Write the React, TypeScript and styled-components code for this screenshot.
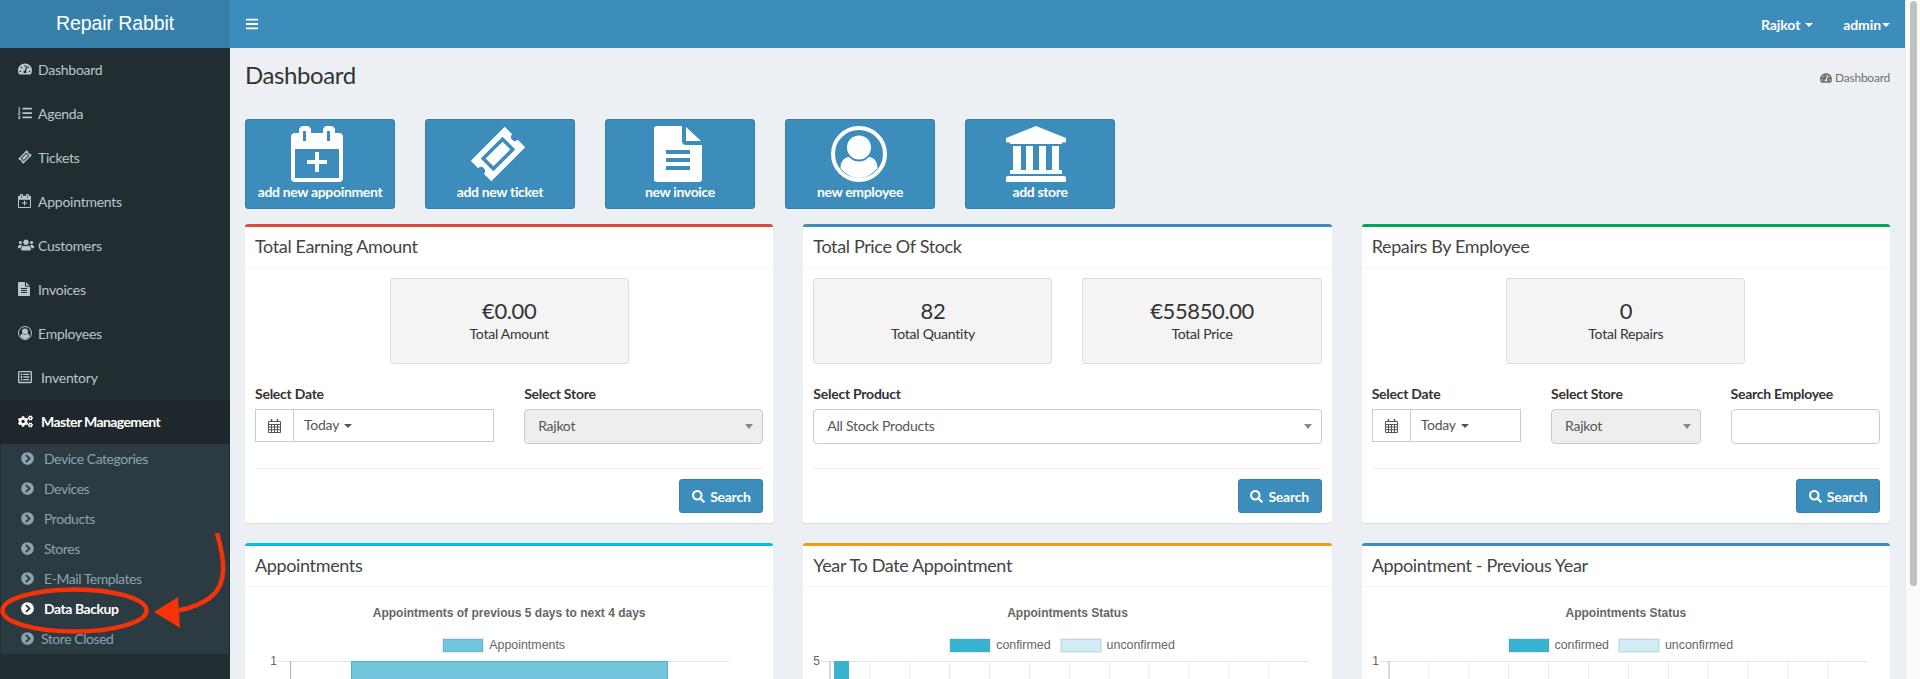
import React from 'react';
import styled, { createGlobalStyle } from 'styled-components';
import {
  FaBars,
  FaChevronCircleRight,
  FaCogs,
  FaListOl,
  FaRegListAlt,
  FaSearch,
  FaTachometerAlt,
  FaUsers,
} from 'react-icons/fa';

const GlobalStyle = createGlobalStyle`
  * { box-sizing: border-box; }
  html, body { margin: 0; height: 100%; overflow: hidden; }
  body {
    font-family: "Lato", "Noto Sans", sans-serif;
    font-size: 14px;
    letter-spacing: -0.25px;
    color: #333;
    background: #ecf0f5;
  }
`;

const Page = styled.div`
  position: relative;
  display: flex;
  height: 679px;
  overflow: hidden;
`;

const Sidebar = styled.aside`
  flex: 0 0 230px;
  background: #222d32;
`;

const Logo = styled.div`
  height: 48px;
  background: #367fa9;
  color: #fff;
  font-family: "Liberation Sans", Arial, sans-serif;
  font-size: 19.5px;
  letter-spacing: -0.1px;
  line-height: 46px;
  text-align: center;
`;

const NavItem = styled.div<{ $active?: boolean }>`
  display: flex;
  align-items: center;
  height: 44px;
  padding: 0 0 2px 18px;
  color: ${(p) => (p.$active ? '#fff' : '#b8c7ce')};
  background: ${(p) => (p.$active ? '#1e282c' : 'transparent')};
  font-weight: ${(p) => (p.$active ? 700 : 400)};
  letter-spacing: ${(p) => (p.$active ? '-0.6px' : '-0.25px')};
`;

const NavIcon = styled.span<{ $wide?: boolean }>`
  display: flex;
  justify-content: flex-start;
  align-items: center;
  width: ${(p) => (p.$wide ? '23px' : '20px')};
`;

const SubMenu = styled.div`
  margin: 0 1px;
  background: #2c3b41;
`;

const SubItem = styled.div<{ $active?: boolean; $tight?: boolean }>`
  display: flex;
  align-items: center;
  height: 30px;
  padding: 0 0 2px 20px;
  gap: ${(p) => (p.$tight ? '7px' : '10px')};
  color: ${(p) => (p.$active ? '#fff' : '#8aa4af')};
  font-weight: ${(p) => (p.$active ? 700 : 400)};
  letter-spacing: -0.45px;
`;

const Main = styled.main`
  flex: 1;
  min-width: 0;
`;

const TopBar = styled.header`
  display: flex;
  align-items: center;
  height: 48px;
  padding: 0 15px;
  background: #3c8dbc;
  color: #fff;
`;

const TopMenu = styled.div<{ $gap?: number }>`
  display: flex;
  align-items: center;
  margin-left: ${(p) => p.$gap ?? 0}px;
  font-weight: 700;
  letter-spacing: -0.1px;
`;

const Caret = styled.i<{ $space: number }>`
  display: block;
  width: 0;
  height: 0;
  margin: 2px 0 0 ${(p) => p.$space}px;
  border-style: solid;
  border-width: 4px 4px 0;
  border-color: currentColor transparent transparent;
`;

const Spacer = styled.div`
  flex: 1;
`;

const ContentHeader = styled.div`
  display: flex;
  align-items: center;
  justify-content: space-between;
  padding: 14px 15px 1px;
`;

const PageTitle = styled.h1`
  margin: 0;
  font-size: 24px;
  font-weight: 400;
  letter-spacing: -0.4px;
  line-height: 26px;
  color: #333;
`;

const Crumb = styled.div`
  display: flex;
  align-items: center;
  gap: 3px;
  margin-top: 5px;
  font-size: 12px;
  color: #6f6f6f;
`;

const QuickRow = styled.div`
  display: flex;
  gap: 30px;
  padding: 30px 15px 15px;
`;

const QuickButton = styled.div`
  display: flex;
  flex-direction: column;
  align-items: center;
  width: 150px;
  height: 90px;
  padding-top: 6px;
  background: #3c8dbc;
  border: 1px solid #367fa9;
  border-radius: 3px;
  color: #fff;
  font-weight: 700;
  letter-spacing: -0.34px;
`;

const QuickIcon = styled.span<{ $shift: number }>`
  display: block;
  height: 56px;
  margin-right: ${(p) => p.$shift * 2}px;
`;

const QuickLabel = styled.span`
  line-height: 20px;
`;

const CardGrid = styled.div`
  display: grid;
  grid-template-columns: repeat(3, 1fr);
  gap: 20px 30px;
  padding: 0 15px;
`;

const Card = styled.section<{ $accent: string }>`
  background: #fff;
  border-top: 3px solid ${(p) => p.$accent};
  border-radius: 3px;
  box-shadow: 0 1px 1px rgba(0, 0, 0, 0.1);
`;

const CardHeader = styled.h3`
  margin: 0;
  height: 41px;
  padding: 0 10px;
  border-bottom: 1px solid #f4f4f4;
  font-size: 18px;
  font-weight: 400;
  letter-spacing: -0.36px;
  line-height: 38px;
  color: #444;
`;

const CardBody = styled.div`
  padding: 10px;
`;

const StatRow = styled.div`
  display: flex;
  justify-content: center;
  gap: 30px;
`;

const StatBox = styled.div`
  width: calc((100% - 30px) / 2);
  height: 86px;
  padding-top: 19px;
  background: #f4f4f4;
  border: 1px solid #ddd;
  border-radius: 3px;
  text-align: center;
  color: #333;
`;

const StatValue = styled.div`
  font-size: 22px;
  letter-spacing: -0.4px;
  line-height: 26px;
`;

const StatLabel = styled.div`
  line-height: 20px;
`;

const FieldRow = styled.div<{ $cols: number }>`
  display: grid;
  grid-template-columns: repeat(${(p) => p.$cols}, 1fr);
  gap: 30px;
  margin-top: 20px;
  height: 59px;
`;

const Field = styled.div`
  min-width: 0;
`;

const FieldLabel = styled.label`
  display: block;
  margin-bottom: 5px;
  font-weight: 700;
  line-height: 20px;
  color: #333;
`;

const DateGroup = styled.div`
  display: flex;
  align-items: stretch;
  height: 33px;
  background: #fff;
  border: 1px solid #ccc;
  color: #555;
`;

const DateAddon = styled.span`
  display: flex;
  align-items: center;
  justify-content: center;
  width: 38px;
  border-right: 1px solid #ccc;
`;

const DateValue = styled.span`
  display: flex;
  align-items: center;
  padding: 0 0 2px 10px;
`;

const SelectBox = styled.div<{ $disabled?: boolean }>`
  position: relative;
  height: 35px;
  padding-left: 13px;
  background: ${(p) => (p.$disabled ? '#eee' : '#fff')};
  border: 1px solid #ccc;
  border-radius: 4px;
  line-height: 31px;
  color: #555;

  &::after {
    content: '';
    position: absolute;
    right: 9px;
    top: 14px;
    border-style: solid;
    border-width: 5px 4px 0;
    border-color: #888 transparent transparent;
  }
`;

const TextInput = styled.input`
  display: block;
  width: 100%;
  height: 35px;
  background: #fff;
  border: 1px solid #ccc;
  border-radius: 4px;
`;

const Divider = styled.hr`
  margin: 25px 0 10px;
  border: 0;
  border-top: 1px solid #f0f0f0;
`;

const ActionRow = styled.div`
  display: flex;
  justify-content: flex-end;
`;

const SearchButton = styled.button`
  display: flex;
  align-items: center;
  justify-content: center;
  gap: 5px;
  width: 84px;
  height: 34px;
  padding: 0;
  background: #3c8dbc;
  border: 1px solid #367fa9;
  border-radius: 3px;
  color: #fff;
  font: 700 14px "Lato", sans-serif;
  letter-spacing: -0.25px;
`;

const ChartTitle = styled.div`
  margin-top: 8px;
  font-family: "Liberation Sans", Arial, sans-serif;
  font-size: 12px;
  font-weight: 700;
  letter-spacing: 0;
  line-height: 16px;
  text-align: center;
  color: #666;
`;

const Legend = styled.div`
  display: flex;
  justify-content: center;
  gap: 10px;
  margin-top: 18px;
  padding-right: 10px;
  font-family: "Liberation Sans", Arial, sans-serif;
  font-size: 12.4px;
  letter-spacing: 0;
  line-height: 13px;
  color: #666;
`;

const LegendItem = styled.span`
  display: flex;
  align-items: center;
  gap: 6px;
`;

const Swatch = styled.i<{ $fill: string; $line: string }>`
  display: block;
  width: 40px;
  height: 13px;
  background: ${(p) => p.$fill};
  border: 1px solid ${(p) => p.$line};
  outline: 1px solid #ebebeb;
`;

const PlotSvg = styled.svg`
  display: block;
  width: 100%;
  height: 60px;
  font-family: "Liberation Sans", Arial, sans-serif;
  font-size: 12px;
  letter-spacing: 0;
`;

const ScrollTrack = styled.div`
  flex: 0 0 15px;
  padding: 1px 3px 0 4px;
  background: #fbfbfb;
  border-left: 1px solid #ececec;
`;

const ScrollThumb = styled.div`
  height: 585px;
  background: #c1c1c1;
  border-radius: 4px;
`;

const Annotation = styled.svg`
  position: absolute;
  left: 0;
  top: 520px;
  width: 240px;
  height: 130px;
  pointer-events: none;
`;

type IconProps = { size: number };

const CalendarPlus = ({ size }: IconProps) => (
  <svg width={(size * 52) / 56} height={size} viewBox="0 0 52 56" fill="currentColor">
    <path
      fillRule="evenodd"
      d="M8 3a5 5 0 0 1 5-3h2a5 5 0 0 1 5 3v4h12V3a5 5 0 0 1 5-3h2a5 5 0 0 1 5 3v4h4a4 4 0 0 1 4 4v41a4 4 0 0 1-4 4H4a4 4 0 0 1-4-4V11a4 4 0 0 1 4-4h4zM12 5v10h3V5zM36 5v10h3V5zM4 23v29h44V23z"
    />
    <path d="M24 26h4v8h8v4h-8v8h-4v-8h-8v-4h8z" />
  </svg>
);

const Ticket = ({ size }: IconProps) => (
  <svg width={size} height={size} viewBox="-28 -28 56 56" fill="currentColor">
    <g transform="rotate(-45)">
      <path
        fillRule="evenodd"
        d="M-24-14.500H24V-4a4 4 0 0 0 0 8V14.500H-24V4a4 4 0 0 0 0-8zM-15.500-9V9H15.500V-9zM-12-5.500H12V5.500H-12z"
      />
    </g>
  </svg>
);

const FileText = ({ size }: IconProps) => (
  <svg width={(size * 48) / 56} height={size} viewBox="0 0 48 56" fill="currentColor">
    <path
      fillRule="evenodd"
      d="M3 0H28V15a4 4 0 0 0 4 4H48V53a3 3 0 0 1-3 3H3a3 3 0 0 1-3-3V3a3 3 0 0 1 3-3zM12 24v4h24v-4zM12 32v4h24v-4zM12 40v4h24v-4z"
    />
    <path d="M32 1L47 15H32z" />
  </svg>
);

const UserCircle = ({ size }: IconProps) => (
  <svg width={size} height={size} viewBox="0 0 56 56" fill="currentColor">
    <circle cx="28" cy="28" r="26" fill="none" stroke="currentColor" strokeWidth="4" />
    <circle cx="28" cy="21.500" r="12" />
    <path d="M9.500 42C9.500 36 13 31 18 31c3 3 6 4.500 10 4.500s7-1.500 10-4.500c5 0 8.500 5 8.500 11-4.500 6-11.500 10-18.500 10s-14-4-18.500-10z" />
  </svg>
);

const Bank = ({ size }: IconProps) => (
  <svg width={(size * 60) / 56} height={size} viewBox="0 0 60 56" fill="currentColor">
    <path d="M30 0L60 12v3a1.500 1.500 0 0 1-1.500 1.500H56V18H4v-1.500H1.500A1.500 1.500 0 0 1 0 15v-3z" />
    <path d="M7 20h8v24H7zM20 20h7v24h-7zM33 20h7v24h-7zM46 20h7v24h-7z" />
    <path d="M5 44h50a1 1 0 0 1 1 1v3H4v-3a1 1 0 0 1 1-1z" />
    <path d="M2 50h56a2 2 0 0 1 2 2v4H0v-4a2 2 0 0 1 2-2z" />
  </svg>
);

const CalendarGrid = () => (
  <svg width="13" height="14" viewBox="0 0 13 14" fill="none" stroke="currentColor">
    <path d="M3.500 0v3M9.500 0v3" strokeWidth="1.500" />
    <path d="M.500 2.500h12v11H.500zM.500 5.500h12M.500 8h12M.500 10.700h12M3.500 5.500v8M6.500 5.500v8M9.500 5.500v8" strokeWidth="1" />
  </svg>
);

const navItems: { label: string; icon: React.ReactNode; wide?: boolean }[] = [
  { label: 'Dashboard', icon: <FaTachometerAlt size={14} /> },
  { label: 'Agenda', icon: <FaListOl size={14} /> },
  { label: 'Tickets', icon: <Ticket size={14} /> },
  { label: 'Appointments', icon: <CalendarPlus size={14} /> },
  { label: 'Customers', icon: <FaUsers size={16} /> },
  { label: 'Invoices', icon: <FileText size={14} /> },
  { label: 'Employees', icon: <UserCircle size={14} /> },
  { label: 'Inventory', icon: <FaRegListAlt size={14} />, wide: true },
];

const subItems = ['Device Categories', 'Devices', 'Products', 'Stores', 'E-Mail Templates', 'Data Backup', 'Store Closed'];

const quickActions: { label: string; icon: React.ReactNode; shift: number }[] = [
  { label: 'add new appoinment', icon: <CalendarPlus size={56} />, shift: 3 },
  { label: 'add new ticket', icon: <Ticket size={56} />, shift: 2 },
  { label: 'new invoice', icon: <FileText size={56} />, shift: 2 },
  { label: 'new employee', icon: <UserCircle size={56} />, shift: 1 },
  { label: 'add store', icon: <Bank size={56} />, shift: 4 },
];

const DateField = () => (
  <Field>
    <FieldLabel>Select Date</FieldLabel>
    <DateGroup>
      <DateAddon>
        <CalendarGrid />
      </DateAddon>
      <DateValue>
        Today
        <Caret $space={5} />
      </DateValue>
    </DateGroup>
  </Field>
);

const StoreField = () => (
  <Field>
    <FieldLabel>Select Store</FieldLabel>
    <SelectBox $disabled>Rajkot</SelectBox>
  </Field>
);

const Stat = ({ value, label }: { value: string; label: string }) => (
  <StatBox>
    <StatValue>{value}</StatValue>
    <StatLabel>{label}</StatLabel>
  </StatBox>
);

const SearchAction = () => (
  <>
    <Divider />
    <ActionRow>
      <SearchButton>
        <FaSearch size={13} /> Search
      </SearchButton>
    </ActionRow>
  </>
);

const StatusLegend = () => (
  <Legend>
    <LegendItem>
      <Swatch $fill="#37b2cf" $line="#37b2cf" />
      confirmed
    </LegendItem>
    <LegendItem>
      <Swatch $fill="#d2ecf4" $line="#b9dce9" />
      unconfirmed
    </LegendItem>
  </Legend>
);

const monthLines = Array.from({ length: 12 }, (_, i) => 17 + i * 39.9);

const StatusPlot = ({ tick, bar }: { tick: string; bar?: boolean }) => (
  <PlotSvg viewBox="0 0 508 60" preserveAspectRatio="xMinYMin">
    <line x1="8" x2="495" y1="9.500" y2="9.500" stroke="#e4e4e4" />
    {monthLines.map((x, i) => (
      <line key={x} x1={x} x2={x} y1="9" y2="60" stroke={i === 0 ? '#b5b5b5' : '#ececec'} />
    ))}
    {bar && <rect x="21" y="9" width="15" height="60" fill="#37b2cf" />}
    <text x="7" y="13" textAnchor="end" fill="#666">
      {tick}
    </text>
  </PlotSvg>
);

export default function App() {
  return (
    <Page>
      <GlobalStyle />
      <Sidebar>
        <Logo>Repair Rabbit</Logo>
        {navItems.map((item) => (
          <NavItem key={item.label}>
            <NavIcon $wide={item.wide}>{item.icon}</NavIcon>
            {item.label}
          </NavItem>
        ))}
        <NavItem $active>
          <NavIcon $wide>
            <FaCogs size={15} />
          </NavIcon>
          Master Management
        </NavItem>
        <SubMenu>
          {subItems.map((label) => (
            <SubItem key={label} $active={label === 'Data Backup'} $tight={label === 'Store Closed'}>
              <FaChevronCircleRight size={13} />
              {label}
            </SubItem>
          ))}
        </SubMenu>
      </Sidebar>

      <Main>
        <TopBar>
          <FaBars size={14} />
          <Spacer />
          <TopMenu>
            Rajkot
            <Caret $space={5} />
          </TopMenu>
          <TopMenu $gap={30}>
            admin
            <Caret $space={1} />
          </TopMenu>
        </TopBar>

        <ContentHeader>
          <PageTitle>Dashboard</PageTitle>
          <Crumb>
            <FaTachometerAlt size={12} /> Dashboard
          </Crumb>
        </ContentHeader>

        <QuickRow>
          {quickActions.map((action) => (
            <QuickButton key={action.label}>
              <QuickIcon $shift={action.shift}>{action.icon}</QuickIcon>
              <QuickLabel>{action.label}</QuickLabel>
            </QuickButton>
          ))}
        </QuickRow>

        <CardGrid>
          <Card $accent="#dd4b39">
            <CardHeader>Total Earning Amount</CardHeader>
            <CardBody>
              <StatRow>
                <Stat value="€0.00" label="Total Amount" />
              </StatRow>
              <FieldRow $cols={2}>
                <DateField />
                <StoreField />
              </FieldRow>
              <SearchAction />
            </CardBody>
          </Card>

          <Card $accent="#3c8dbc">
            <CardHeader>Total Price Of Stock</CardHeader>
            <CardBody>
              <StatRow>
                <Stat value="82" label="Total Quantity" />
                <Stat value="€55850.00" label="Total Price" />
              </StatRow>
              <FieldRow $cols={1}>
                <Field>
                  <FieldLabel>Select Product</FieldLabel>
                  <SelectBox>All Stock Products</SelectBox>
                </Field>
              </FieldRow>
              <SearchAction />
            </CardBody>
          </Card>

          <Card $accent="#00a65a">
            <CardHeader>Repairs By Employee</CardHeader>
            <CardBody>
              <StatRow>
                <Stat value="0" label="Total Repairs" />
              </StatRow>
              <FieldRow $cols={3}>
                <DateField />
                <StoreField />
                <Field>
                  <FieldLabel>Search Employee</FieldLabel>
                  <TextInput />
                </Field>
              </FieldRow>
              <SearchAction />
            </CardBody>
          </Card>

          <Card $accent="#00c0ef">
            <CardHeader>Appointments</CardHeader>
            <CardBody>
              <ChartTitle>Appointments of previous 5 days to next 4 days</ChartTitle>
              <Legend>
                <LegendItem>
                  <Swatch $fill="#72c5dc" $line="#5dbbd6" />
                  Appointments
                </LegendItem>
              </Legend>
              <PlotSvg viewBox="0 0 508 60" preserveAspectRatio="xMinYMin">
                <line x1="23" x2="474" y1="9.500" y2="9.500" stroke="#e4e4e4" />
                <line x1="35.500" x2="35.500" y1="9" y2="60" stroke="#b5b5b5" />
                <rect x="96.500" y="9.500" width="316" height="60" fill="#72c5dc" stroke="#4fb1d1" />
                <text x="22" y="13" textAnchor="end" fill="#666">
                  1
                </text>
              </PlotSvg>
            </CardBody>
          </Card>

          <Card $accent="#f39c12">
            <CardHeader>Year To Date Appointment</CardHeader>
            <CardBody>
              <ChartTitle>Appointments Status</ChartTitle>
              <StatusLegend />
              <StatusPlot tick="5" bar />
            </CardBody>
          </Card>

          <Card $accent="#3c8dbc">
            <CardHeader>Appointment - Previous Year</CardHeader>
            <CardBody>
              <ChartTitle>Appointments Status</ChartTitle>
              <StatusLegend />
              <StatusPlot tick="1" />
            </CardBody>
          </Card>
        </CardGrid>
      </Main>

      <ScrollTrack>
        <ScrollThumb />
      </ScrollTrack>

      <Annotation viewBox="0 0 240 130">
        <ellipse cx="74.500" cy="90.500" rx="72" ry="21" fill="none" stroke="#f5330b" strokeWidth="4.500" />
        <path d="M217 13c8 28 10 50-5 63-8 7-20 12-36 15" fill="none" stroke="#f5330b" strokeWidth="4.500" />
        <path d="M154 92L178 77L180 108z" fill="#f5330b" />
      </Annotation>
    </Page>
  );
}
